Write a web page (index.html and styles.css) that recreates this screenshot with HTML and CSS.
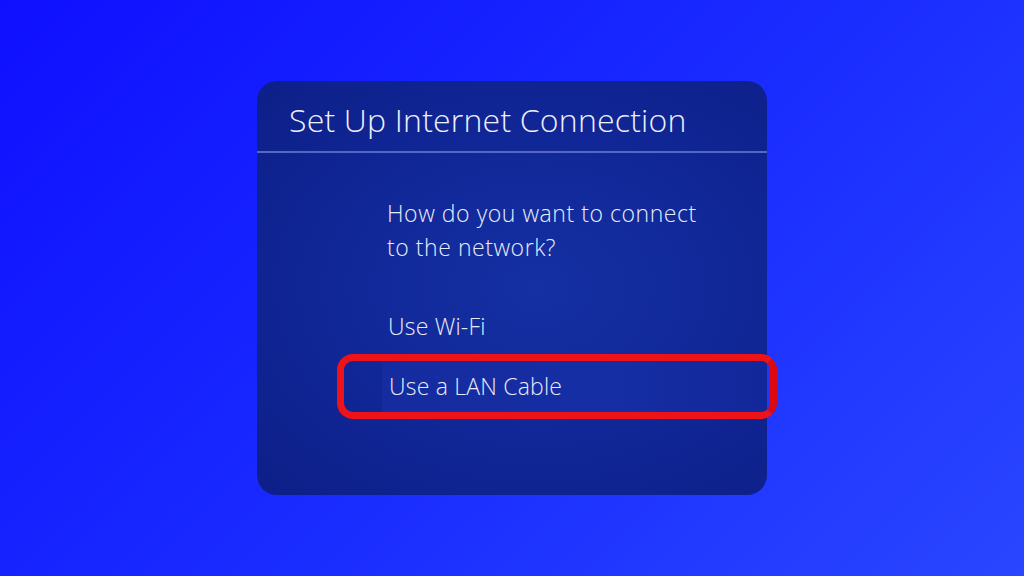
FILE: index.html
```html
<!DOCTYPE html>
<html lang="en">
<head>
<meta charset="utf-8">
<title>Set Up Internet Connection</title>
<link rel="stylesheet" href="styles.css">
</head>
<body>
<div class="panel">
  <div class="title">Set Up Internet Connection</div>
  <div class="divider"></div>
  <div class="question">How do you want to connect<br>to the network?</div>
  <div class="options">
    <div class="option">Use Wi-Fi</div>
    <div class="option selected">Use a LAN Cable<span class="marker"></span></div>
  </div>
</div>
</body>
</html>
```
FILE: styles.css
```css
html, body {
  margin: 0;
  height: 100%;
}
body {
  background: linear-gradient(135deg, #0f10ff 0%, #1a2dff 55%, #2a46ff 100%);
  display: flex;
  align-items: center;
  justify-content: center;
  font-family: "Open Sans", "Noto Sans", sans-serif;
  font-weight: 300;
  color: #e8ecf8;
}
.panel {
  width: 510px;
  height: 414px;
  box-sizing: border-box;
  border-radius: 20px;
  background: radial-gradient(ellipse at 55% 50%, #1430a3 0%, #112899 45%, #0d1f88 100%);
  display: flex;
  flex-direction: column;
}
.title {
  font-size: 32px;
  line-height: 40px;
  padding: 19px 0 11px 32px;
  letter-spacing: 0.2px;
  color: #eef0fa;
}
.divider {
  height: 2px;
  background: #5468c0;
}
.question {
  margin: 43px 0 0 130px;
  font-size: 23px;
  line-height: 34px;
  letter-spacing: 0.55px;
}
.options {
  margin: 35px 0 0 125px;
  display: flex;
  flex-direction: column;
  gap: 2px;
}
.option {
  position: relative;
  height: 58px;
  box-sizing: border-box;
  padding: 0 0 4px 6px;
  font-size: 23px;
  line-height: 54px;
  letter-spacing: 0.2px;
}
.option.selected {
  padding-left: 7px;
  background: linear-gradient(90deg, #152ca0 0%, #152ea3 60%, #12279a 100%);
}
.marker {
  position: absolute;
  left: -45px;
  right: -10px;
  top: -5px;
  bottom: -2px;
  border: 7px solid #ee1318;
  border-right-color: #dc0a10;
  border-radius: 16px;
}
```
